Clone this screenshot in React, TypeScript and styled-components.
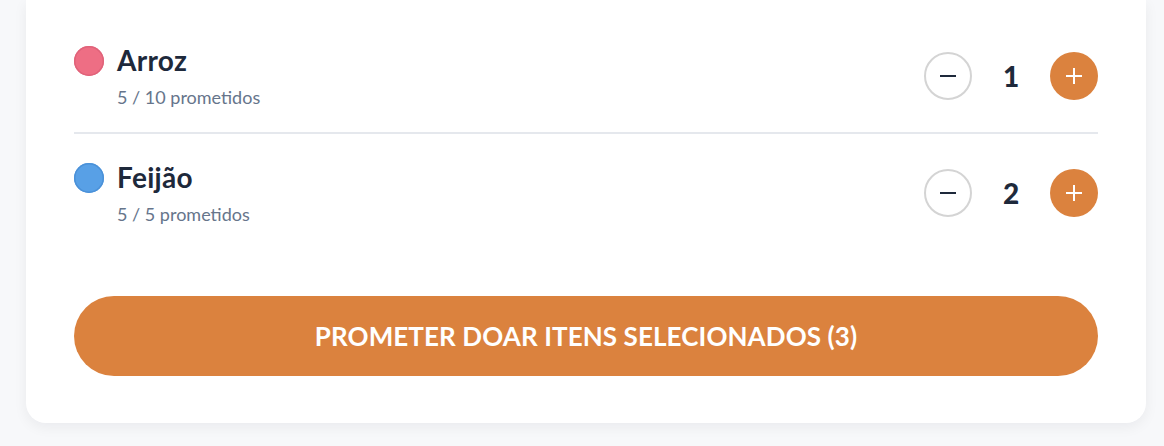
import React, { useState } from "react";
import styled, { createGlobalStyle } from "styled-components";

const GlobalStyle = createGlobalStyle`
  html, body {
    margin: 0;
    padding: 0;
    background: #f7f8fa;
    font-family: "Lato", "Inter", "Noto Sans", sans-serif;
  }
  * { box-sizing: border-box; }
`;

const Page = styled.div`
  width: 1164px;
  height: 446px;
  padding: 0 18px 0 26px;
  overflow: hidden;
`;

const Card = styled.div`
  width: 1120px;
  background: #ffffff;
  border-radius: 0 0 20px 20px;
  box-shadow: 0 4px 14px rgba(15, 23, 42, 0.06);
  padding: 17px 48px 47px;
`;

const Row = styled.div<{ $divider?: boolean }>`
  display: flex;
  align-items: center;
  justify-content: space-between;
  padding: 24px 0 22px;
  border-bottom: ${(p) => (p.$divider ? "2px solid #e5e8ed" : "none")};
`;

const Info = styled.div`
  display: grid;
  grid-template-columns: 30px auto;
  column-gap: 13px;
  align-items: center;
`;

const Dot = styled.span<{ $color: string; $ring: string }>`
  width: 30px;
  height: 30px;
  border-radius: 50%;
  background: ${(p) => p.$color};
  box-shadow: inset 0 0 0 1.5px ${(p) => p.$ring};
`;

const Title = styled.div`
  font-size: 28px;
  font-weight: 700;
  line-height: 39px;
  letter-spacing: 0.3px;
  color: #1e293b;
`;

const Sub = styled.div`
  grid-column: 2;
  margin-top: 4px;
  font-size: 18px;
  line-height: 26px;
  color: #66758b;
`;

const Stepper = styled.div`
  display: flex;
  align-items: center;
  gap: 20px;
`;

const RoundButton = styled.button<{ $filled?: boolean }>`
  width: 48px;
  height: 48px;
  border-radius: 50%;
  padding: 0;
  display: flex;
  align-items: center;
  justify-content: center;
  cursor: pointer;
  background: ${(p) => (p.$filled ? "#db823e" : "#ffffff")};
  border: ${(p) => (p.$filled ? "none" : "2px solid #d4d4d4")};
  color: ${(p) => (p.$filled ? "#ffffff" : "#1e293b")};
`;

const Count = styled.span`
  width: 38px;
  text-align: center;
  font-size: 28px;
  font-weight: 900;
  color: #1e293b;
`;

const SubmitButton = styled.button`
  display: block;
  width: 100%;
  height: 80px;
  margin-top: 47px;
  border: none;
  border-radius: 40px;
  background: #db823e;
  color: #ffffff;
  font-family: inherit;
  font-size: 26px;
  font-weight: 700;
  letter-spacing: 0.1px;
  text-transform: uppercase;
  cursor: pointer;
`;

const MinusIcon = () => (
  <svg width="16" height="16" viewBox="0 0 16 16">
    <path d="M0 8h16" stroke="currentColor" strokeWidth="2" />
  </svg>
);

const PlusIcon = () => (
  <svg width="16" height="16" viewBox="0 0 16 16">
    <path d="M0 8h16M8 0v16" stroke="currentColor" strokeWidth="2" />
  </svg>
);

type Item = {
  name: string;
  promised: number;
  goal: number;
  color: string;
  ring: string;
};

const items: Item[] = [
  { name: "Arroz", promised: 5, goal: 10, color: "#ee6e84", ring: "#e0637a" },
  { name: "Feijão", promised: 5, goal: 5, color: "#58a0e6", ring: "#4b91d8" },
];

export default function App() {
  const [counts, setCounts] = useState<number[]>([1, 2]);
  const total = counts.reduce((a, b) => a + b, 0);

  const change = (i: number, d: number) =>
    setCounts((c) => c.map((v, j) => (j === i ? Math.max(0, v + d) : v)));

  return (
    <>
      <GlobalStyle />
      <Page>
        <Card>
          {items.map((item, i) => (
            <Row key={item.name} $divider={i < items.length - 1}>
              <Info>
                <Dot $color={item.color} $ring={item.ring} />
                <Title>{item.name}</Title>
                <Sub>
                  {item.promised} / {item.goal} prometidos
                </Sub>
              </Info>
              <Stepper>
                <RoundButton aria-label="Diminuir" onClick={() => change(i, -1)}>
                  <MinusIcon />
                </RoundButton>
                <Count>{counts[i]}</Count>
                <RoundButton $filled aria-label="Aumentar" onClick={() => change(i, 1)}>
                  <PlusIcon />
                </RoundButton>
              </Stepper>
            </Row>
          ))}
          <SubmitButton>Prometer doar itens selecionados ({total})</SubmitButton>
        </Card>
      </Page>
    </>
  );
}
